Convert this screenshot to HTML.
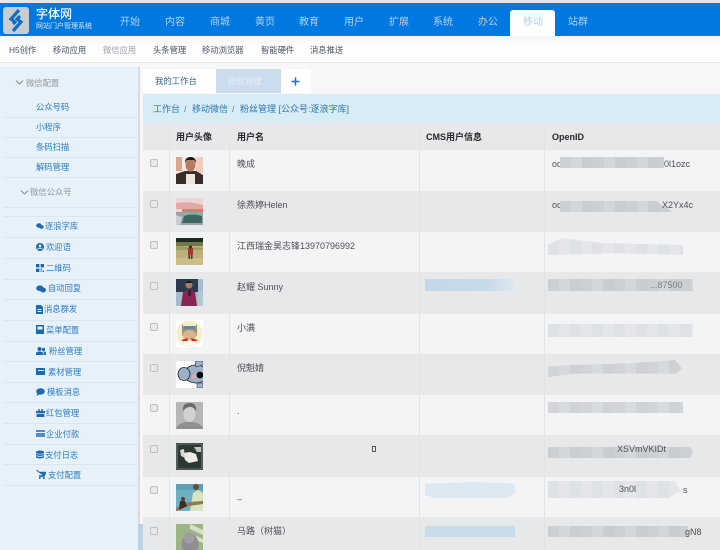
<!DOCTYPE html>
<html lang="zh-CN">
<head>
<meta charset="utf-8">
<title>字体网</title>
<style>
*{box-sizing:border-box}
html,body{margin:0;padding:0;width:720px;height:550px;overflow:hidden;background:#f7f7f7}
body{font-family:"Liberation Sans","Noto Sans CJK SC",sans-serif;position:relative}
#r{position:absolute;left:0;top:0;width:720px;height:550px;overflow:hidden;filter:blur(.3px)}
#r div,#r svg{position:absolute}
.t{white-space:nowrap;line-height:12px}
.n{top:17px;font-size:10px;color:#b2d3f6}
.s{top:44px;font-size:8.3px;color:#4a535c}
.m{left:36px;font-size:8.3px;color:#2f7cc0}
.d{left:4px;width:134px;height:1px;background:#d9e7f1}
.g{left:143px;width:577px}
.o{background:#f2f4f6}
.e{background:#e7e8ea}
.v{top:123px;width:1px;height:427px;background:#e1e3e6}
.h{top:131px;font-size:9px;font-weight:bold;color:#24282c}
.u{font-size:9px;color:#4c5056;left:237px}
.i{left:552px;font-size:9px;color:#4c5056}
.c{left:150px;width:8px;height:8px;border:1px solid #bdbfc3;border-radius:2px;background:#e8e9eb}
.av{left:176px;width:27px;height:27px;overflow:hidden}
.b{background:repeating-linear-gradient(90deg,#cdd0d3 0 11px,#d4d7da 11px 22px,#c9ccd0 22px 33px)}
.b2{background:repeating-linear-gradient(90deg,#dfe2e5 0 11px,#e4e6e9 11px 22px)}
.ic{left:36px;width:8px;height:8px}
.sm{background:#f2f4f6}
</style>
</head>
<body>
<div id="r">
<!-- top bar -->
<div style="left:0;top:0;width:720px;height:3px;background:#e4e6e8"></div>
<div style="left:0;top:3px;width:720px;height:33px;background:#0078e2"></div>
<div style="left:3px;top:7px;width:26px;height:27px;background:#c9cdd2;border-radius:3px"></div>
<svg style="left:3px;top:7px" width="26" height="27" viewBox="0 0 26 27"><path d="M16 3 L8 12 L12 15 L10 17 M17 9 L14 12 L18 15 L10 24" fill="none" stroke="#0f6fc4" stroke-width="3.2"/></svg>
<div class="t" style="left:36px;top:7px;font-size:12px;color:#fff;line-height:14px;-webkit-text-stroke:.2px #fff">字体网</div>
<div class="t" style="left:36px;top:21px;font-size:7px;color:#d8e8f8;line-height:11px">网站门户管理系统</div>
<div class="t n" style="left:120px">开始</div>
<div class="t n" style="left:165px">内容</div>
<div class="t n" style="left:210px">商城</div>
<div class="t n" style="left:255px">黄页</div>
<div class="t n" style="left:299px">教育</div>
<div class="t n" style="left:344px">用户</div>
<div class="t n" style="left:389px">扩展</div>
<div class="t n" style="left:433px">系统</div>
<div class="t n" style="left:478px">办公</div>
<div style="left:510px;top:10px;width:45px;height:26px;background:#fff;border-radius:3px 3px 0 0"></div>
<div class="t n" style="left:523px;color:#b3cff2">移动</div>
<div class="t n" style="left:568px">站群</div>
<!-- sub nav -->
<div style="left:0;top:36px;width:720px;height:27px;background:linear-gradient(#f3f4f6,#fdfdfe 30%);border-bottom:1px solid #e6e8ea"></div>
<div class="t s" style="left:9px">H5创作</div>
<div class="t s" style="left:53px">移动应用</div>
<div class="t s" style="left:103px;color:#9a9fa5">微信应用</div>
<div class="t s" style="left:153px">头条管理</div>
<div class="t s" style="left:202px">移动浏览器</div>
<div class="t s" style="left:261px">智能硬件</div>
<div class="t s" style="left:310px">消息推送</div>
<!-- sidebar -->
<div style="left:0;top:67px;width:138px;height:483px;background:#e6f1f9"></div>
<div style="left:138px;top:67px;width:2px;height:483px;background:#d9dcdf"></div>
<svg style="left:15px;top:79px" width="9" height="7" viewBox="0 0 9 7"><path d="M1 1.5 L4.500 5 L8 1.500" fill="none" stroke="#8b9299" stroke-width="1.100"/></svg>
<div class="t" style="left:26px;top:77px;font-size:8.3px;color:#94989c">微信配置</div>
<div class="t m" style="top:101px">公众号码</div><div class="d" style="top:117px"></div>
<div class="t m" style="top:121px">小程序</div><div class="d" style="top:137px"></div>
<div class="t m" style="top:141px">条码扫描</div><div class="d" style="top:157px"></div>
<div class="t m" style="top:161px">解码管理</div><div class="d" style="top:177px"></div>
<svg style="left:20px;top:189px" width="9" height="7" viewBox="0 0 9 7"><path d="M1 1.5 L4.500 5 L8 1.500" fill="none" stroke="#8b9299" stroke-width="1.100"/></svg>
<div class="t" style="left:30px;top:186px;font-size:8.3px;color:#94989c">微信公众号</div>
<div class="d" style="top:207px"></div><div class="d" style="top:216px"></div>

<svg class="ic" style="top:222px" viewBox="0 0 8 8"><ellipse cx="3" cy="3.500" rx="2.800" ry="2.200" fill="#1d69b0"/><ellipse cx="5.500" cy="5" rx="2.300" ry="1.800" fill="#1d69b0"/></svg>
<div class="t m" style="left:45px;top:220px">逐浪字库</div><div class="d" style="top:237px"></div>
<svg class="ic" style="top:243px" viewBox="0 0 8 8"><circle cx="4" cy="4" r="4" fill="#1d69b0"/><circle cx="4" cy="2.800" r="1.300" fill="#e6f1f9"/><path d="M1.500 6.200 Q4 3.800 6.500 6.200" stroke="#e6f1f9" fill="none"/></svg>
<div class="t m" style="left:46px;top:241px">欢迎语</div><div class="d" style="top:258px"></div>
<svg class="ic" style="top:264px" viewBox="0 0 8 8"><path d="M0 0h3.400v3.400H0zM4.600 0H8v3.400H4.600zM0 4.600h3.400V8H0z" fill="#1d69b0"/><path d="M4.600 4.600h1.400v1.400H4.600zM6.600 6.600H8V8H6.600zM4.600 6.600h1v1.400h-1z" fill="#1d69b0"/></svg>
<div class="t m" style="left:46px;top:262px">二维码</div><div class="d" style="top:279px"></div>
<svg class="ic" style="width:10px;height:8px;top:285px" viewBox="0 0 10 8"><ellipse cx="3.800" cy="3.200" rx="3.600" ry="2.800" fill="#1d69b0"/><ellipse cx="7" cy="5" rx="3" ry="2.500" fill="#1d69b0"/></svg>
<div class="t m" style="left:48px;top:282px">自动回复</div><div class="d" style="top:299px"></div>
<svg class="ic" style="width:7px;height:9px;top:305px" viewBox="0 0 7 9"><path d="M0 0h5l2 2v7H0z" fill="#1d69b0"/><path d="M1.500 4h4v1h-4zM1.500 6h4v1h-4z" fill="#e6f1f9"/></svg>
<div class="t m" style="left:44px;top:303px">消息群发</div><div class="d" style="top:320px"></div>
<svg class="ic" style="height:9px;top:325px" viewBox="0 0 8 9"><path d="M0 0h8v9H0z" fill="#1d69b0"/><path d="M1.500 1.500h5v3h-5z" fill="#e6f1f9"/></svg>
<div class="t m" style="left:46px;top:324px">菜单配置</div><div class="d" style="top:341px"></div>
<svg class="ic" style="width:10px;height:8px;top:347px" viewBox="0 0 10 8"><circle cx="3.500" cy="2" r="2" fill="#1d69b0"/><circle cx="7.500" cy="2.400" r="1.600" fill="#1d69b0"/><path d="M0 8V6.500Q0 4.500 3.500 4.500T7 6.500V8zM7.700 8V6Q7.700 5 7 4.400 10 4.200 10 6.200V8z" fill="#1d69b0"/></svg>
<div class="t m" style="left:49px;top:345px">粉丝管理</div><div class="d" style="top:361px"></div>
<svg class="ic" style="width:9px;height:7px;top:368px" viewBox="0 0 9 7"><path d="M0 0h9v7H0z" fill="#1d69b0"/><path d="M2 2h6v1H2z" fill="#e6f1f9"/></svg>
<div class="t m" style="left:48px;top:366px">素材管理</div><div class="d" style="top:382px"></div>
<svg class="ic" style="width:9px;height:8px;top:388px" viewBox="0 0 9 8"><ellipse cx="4.500" cy="3.400" rx="4.300" ry="3.200" fill="#1d69b0"/><path d="M1.500 5l-1 3 3-1.600z" fill="#1d69b0"/></svg>
<div class="t m" style="left:47px;top:386px">模板消息</div><div class="d" style="top:402px"></div>
<svg class="ic" style="width:9px;height:8px;top:409px" viewBox="0 0 9 8"><path d="M0 2h9v2H0zM.6 4.800h7.800V8H.6z" fill="#1d69b0"/><circle cx="3" cy="1" r="1" fill="#1d69b0"/><circle cx="6" cy="1" r="1" fill="#1d69b0"/></svg>
<div class="t m" style="left:46px;top:407px">红包管理</div><div class="d" style="top:423px"></div>
<svg class="ic" style="width:9px;height:7px;top:430px" viewBox="0 0 9 7"><path d="M0 0h9v7H0z" fill="#4d8cc6"/><path d="M0 2h9v1H0z" fill="#e6f1f9"/></svg>
<div class="t m" style="left:46px;top:428px">企业付款</div><div class="d" style="top:444px"></div>
<svg class="ic" style="height:9px;top:450px" viewBox="0 0 8 9"><path d="M0 1.500Q4-.5 8 1.500V7.500Q4 9.500 0 7.500z" fill="#1d69b0"/><path d="M0 3.400Q4 5 8 3.400M0 5.600Q4 7.200 8 5.600" stroke="#e6f1f9" stroke-width=".7" fill="none"/></svg>
<div class="t m" style="left:45px;top:449px">支付日志</div><div class="d" style="top:464px"></div>
<svg class="ic" style="width:10px;height:9px;top:470px" viewBox="0 0 10 9"><path d="M0 .5h2l.6 1.500H10L8.800 5.600H3.200L3.600 6.600H8.600" fill="#1d69b0" stroke="#1d69b0" stroke-width=".6"/><circle cx="3.800" cy="8" r="1" fill="#1d69b0"/><circle cx="7.800" cy="8" r="1" fill="#1d69b0"/></svg>
<div class="t m" style="left:48px;top:469px">支付配置</div><div class="d" style="top:485px"></div>
<div style="left:138px;top:524px;width:11px;height:26px;background:#bdd3e5;border-radius:0 6px 0 0"></div>
<!-- tabs -->
<div style="left:143px;top:69px;width:168px;height:24px;background:#fff;border-radius:2px"></div>
<div class="t" style="left:155px;top:75px;font-size:8.4px;color:#3a628c">我的工作台</div>
<div style="left:216px;top:69px;width:65px;height:24px;background:#ccdcef"></div>
<div class="t" style="left:228px;top:75px;font-size:8.4px;color:#e4edf7">粉丝管理</div>
<svg style="left:291px;top:77px" width="9" height="9" viewBox="0 0 9 9"><path d="M4.500 .5v8M.5 4.500h8" stroke="#1a6fc0" stroke-width="1.500"/></svg>
<!-- breadcrumb -->
<div style="left:143px;top:94px;width:577px;height:29px;background:#d8ecf5"></div>
<div class="t" style="left:153px;top:103px;font-size:9px;color:#2f76b0">工作台</div>
<div class="t" style="left:184px;top:103px;font-size:9px;color:#6a7f90">/</div>
<div class="t" style="left:192px;top:103px;font-size:9px;color:#2f76b0">移动微信</div>
<div class="t" style="left:232px;top:103px;font-size:9px;color:#6a7f90">/</div>
<div class="t" style="left:240px;top:103px;font-size:9px;color:#2f76b0">粉丝管理 [公众号:逐浪字库]</div>
<!-- table rows -->
<div class="g e" style="top:123px;height:27px"></div>
<div class="g o" style="top:150px;height:41px"></div>
<div class="g e" style="top:191px;height:41px"></div>
<div class="g o" style="top:232px;height:40px"></div>
<div class="g e" style="top:272px;height:42px"></div>
<div class="g o" style="top:314px;height:40px"></div>
<div class="g e" style="top:354px;height:41px"></div>
<div class="g o" style="top:395px;height:40px"></div>
<div class="g e" style="top:435px;height:42px"></div>
<div class="g o" style="top:477px;height:40px"></div>
<div class="g e" style="top:517px;height:33px"></div>
<div class="v" style="left:169px"></div>
<div class="v" style="left:229px"></div>
<div class="v" style="left:419px"></div>
<div class="v" style="left:544px"></div>
<div class="t h" style="left:176px">用户头像</div>
<div class="t h" style="left:237px">用户名</div>
<div class="t h" style="left:426px">CMS用户信息</div>
<div class="t h" style="left:552px">OpenID</div>
<!-- checkboxes -->
<div class="c" style="top:159px"></div>
<div class="c" style="top:200px"></div>
<div class="c" style="top:241px"></div>
<div class="c" style="top:282px"></div>
<div class="c" style="top:323px"></div>
<div class="c" style="top:364px"></div>
<div class="c" style="top:404px"></div>
<div class="c" style="top:445px"></div>
<div class="c" style="top:486px"></div>
<div class="c" style="top:527px"></div>
<!-- names -->
<div class="t u" style="top:158px">晚成</div>
<div class="t u" style="top:199px">徐燕婷Helen</div>
<div class="t u" style="top:240px">江西瑞金昊志锋13970796992</div>
<div class="t u" style="top:281px">赵耀 Sunny</div>
<div class="t u" style="top:322px">小满</div>
<div class="t u" style="top:362px">倪魁婧</div>
<div class="t u" style="top:405px">.</div>
<div style="left:372px;top:446px;width:4px;height:6px;border:1px solid #555"></div>
<div class="t u" style="top:489px">_</div>
<div class="t u" style="top:525px">马路（树猫）</div>
<!-- avatars -->
<svg class="av" style="top:157px" viewBox="0 0 27 27"><rect width="27" height="27" fill="#f6ebe4"/><path d="M0 0h6v14H0z" fill="#d9a58c"/><path d="M20 0h7v16h-7z" fill="#f0cdbd"/><path d="M0 27V17L9 14H20L27 18V27z" fill="#3a2c28"/><path d="M10 17h9v10h-9z" fill="#ece6de"/><ellipse cx="14.500" cy="8" rx="5" ry="6.500" fill="#b87d60"/><path d="M9 6Q9 0 14.500 0T20 6L18 3H11z" fill="#1d1a1a"/></svg>
<svg class="av" style="top:198px" viewBox="0 0 27 27"><rect width="27" height="27" fill="#eed5d3"/><path d="M0 5 Q13 3 27 7V11H0z" fill="#e2aaa6"/><path d="M6 11h21v3H6z" fill="#e0776c"/><path d="M0 14h27v13H0z" fill="#9aa4a8"/><path d="M8 18 Q16 15 26 18V25H6z" fill="#3f6661"/><path d="M0 17l6 2-2 8H0z" fill="#c9ced2"/></svg>
<svg class="av" style="top:238px" viewBox="0 0 27 27"><rect width="27" height="27" fill="#bdb07b"/><path d="M0 0h27v4H0z" fill="#1f2a1c"/><path d="M0 4h27v4H0z" fill="#6f7a48"/><path d="M0 8l27 2v2H0z" fill="#9aa062"/><path d="M0 20h27v7H0z" fill="#cdbd8a"/><path d="M12 10h5v7h-5z" fill="#a33a36"/><path d="M12.500 17h1.500v4h-1.500zM15 17h1.500v4H15z" fill="#3a3a3a"/><circle cx="14.500" cy="9" r="1.500" fill="#3a2a22"/></svg>
<svg class="av" style="top:279px" viewBox="0 0 27 27"><rect width="27" height="27" fill="#a4bccd"/><path d="M0 0h22v13H0z" fill="#2d3a4d"/><path d="M22 12h5v15h-5z" fill="#b5c7ce"/><path d="M5 27 L7 13 L13 10 L19 13 L21 27z" fill="#8a2450"/><path d="M12 11h3v6h-3z" fill="#3a2030"/><circle cx="13" cy="6" r="3.500" fill="#a87a62"/><path d="M9.500 4Q13 0 16.500 4z" fill="#17171a"/></svg>
<svg class="av" style="top:320px" viewBox="0 0 27 27"><rect width="27" height="27" fill="#fff"/><circle cx="13.500" cy="13.500" r="13" fill="#f6eecb"/><path d="M6 4 L9 8 H18 L21 4 L21 16 H6z" fill="#9c8f73"/><path d="M8 6h11v3H8z" fill="#5a89a8"/><ellipse cx="13.500" cy="15" rx="7" ry="5" fill="#d9b48f"/><path d="M5 20 L12 18 L11 23z M22 20 L15 18 L16 23z" fill="#e0281d"/><path d="M8 21h11v4H8z" fill="#fff"/></svg>
<svg class="av" style="top:361px" viewBox="0 0 27 27"><rect width="27" height="27" fill="#fff"/><ellipse cx="20" cy="13" rx="12" ry="9" fill="#9db0c8" stroke="#222" stroke-width=".8"/><ellipse cx="8" cy="13" rx="6" ry="6.500" fill="#9db0c8" stroke="#222" stroke-width=".8"/><path d="M19 0 L27 0 V4 L20 6z" fill="#9db0c8" stroke="#222" stroke-width=".5"/><circle cx="24" cy="14" r="3.400" fill="#000"/><circle cx="18" cy="15.500" r="2.100" fill="#f1a9b0"/><path d="M21 22h6v5h-6z" fill="#9db0c8" stroke="#222" stroke-width=".5"/></svg>
<svg class="av" style="top:402px" viewBox="0 0 27 27"><rect width="27" height="27" fill="#b7b7b7"/><ellipse cx="13.500" cy="12" rx="6" ry="8" fill="#d2d2d2"/><path d="M7 9 Q6 1 13.500 1 T20 9 Q17 4 13 5 T7 9z" fill="#6a6a6a"/><path d="M0 27 Q2 20 13.500 20 T27 27z" fill="#8f8f8f"/></svg>
<svg class="av" style="top:443px" viewBox="0 0 27 27"><rect width="27" height="27" fill="#2c3833"/><path d="M7 10 L14 9 L20 11 L22 18 L13 20 L9 17z" fill="#ecece6"/><path d="M4 7 L8 6 L9 15 L5 13z" fill="#d6d8d2"/><path d="M18 4h7v5h-4z" fill="#c3c6c0"/><path d="M1 1h25v25H1z" fill="none" stroke="#aeb2ad" stroke-width=".6"/></svg>
<svg class="av" style="top:484px" viewBox="0 0 27 27"><rect width="27" height="27" fill="#6eafc2"/><path d="M0 0h27v6H0z" fill="#5e9fb5"/><path d="M14 27 L17 9 L22 6 L27 9 V27z" fill="#d7e4bd"/><circle cx="20" cy="3" r="3" fill="#6c4c30"/><path d="M0 24 L13 18 L27 17 V20 L13 22 L0 27z" fill="#8f7a58"/><path d="M4 17h5l2 5-8 4z" fill="#3f2c1e"/><circle cx="7" cy="15" r="2" fill="#5a3c28"/></svg>
<svg class="av" style="top:524px" viewBox="0 0 27 27"><rect width="27" height="27" fill="#9db486"/><path d="M14 0L27 6V11L14 5zM20 12l7 3v4l-7-3z" fill="#d8e0c8"/><ellipse cx="14" cy="20" rx="8.500" ry="10" fill="#8d8d93"/><circle cx="13" cy="14" r="5.500" fill="#9d9da3"/></svg>
<!-- CMS blurs -->
<div style="left:425px;top:279px;width:90px;height:12px;background:linear-gradient(90deg,#c3d8e9,#c9dae8 70%,#dfe8ef)"></div>
<div style="left:425px;top:482px;width:90px;height:16px;background:#dde9f2;clip-path:polygon(0 10%,60% 0,100% 10%,100% 70%,90% 100%,10% 100%,0 80%)"></div>
<div style="left:425px;top:526px;width:90px;height:11px;background:#c8dbe8"></div>
<!-- OpenID -->
<div class="t i" style="top:158px">od</div>
<div class="b" style="left:560px;top:157px;width:104px;height:11px"></div>
<div class="t i" style="left:664px;top:158px">0l1ozc</div>
<div class="t i" style="top:199px">oc</div>
<div class="b" style="left:560px;top:201px;width:113px;height:11px;clip-path:polygon(0 0,85% 0,100% 100%,0 100%)"></div>
<div class="t i" style="left:662px;top:199px">X2Yx4c</div>
<div class="b2" style="left:548px;top:238px;width:135px;height:17px;clip-path:polygon(0 40%,10% 0,40% 30%,100% 40%,100% 100%,50% 90%,0 100%)"></div>
<div class="b" style="left:548px;top:279px;width:145px;height:12px"></div>
<div class="t i" style="left:650px;top:279px;color:#7b7f84">...87500</div>
<div class="b2" style="left:548px;top:324px;width:145px;height:13px"></div>
<div class="b" style="left:548px;top:360px;width:134px;height:17px;opacity:.85;clip-path:polygon(0 40%,15% 30%,60% 20%,95% 0,100% 50%,95% 80%,20% 80%,0 100%)"></div>
<div class="b" style="left:548px;top:402px;width:135px;height:11px;opacity:.85"></div>
<div class="b" style="left:548px;top:447px;width:145px;height:11px;border-radius:0 8px 8px 0"></div>
<div class="t i" style="left:617px;top:443px">XSVmVKIDt</div>
<div class="b2" style="left:548px;top:481px;width:133px;height:17px;clip-path:polygon(0 0,95% 0,100% 60%,90% 100%,0 100%)"></div>
<div class="t i" style="left:619px;top:483px">3n0l</div>
<div class="t i" style="left:683px;top:484px">s</div>
<div class="b" style="left:548px;top:526px;width:140px;height:11px"></div>
<div class="t i" style="left:685px;top:526px">gN8</div>
</div>
</body>
</html>
